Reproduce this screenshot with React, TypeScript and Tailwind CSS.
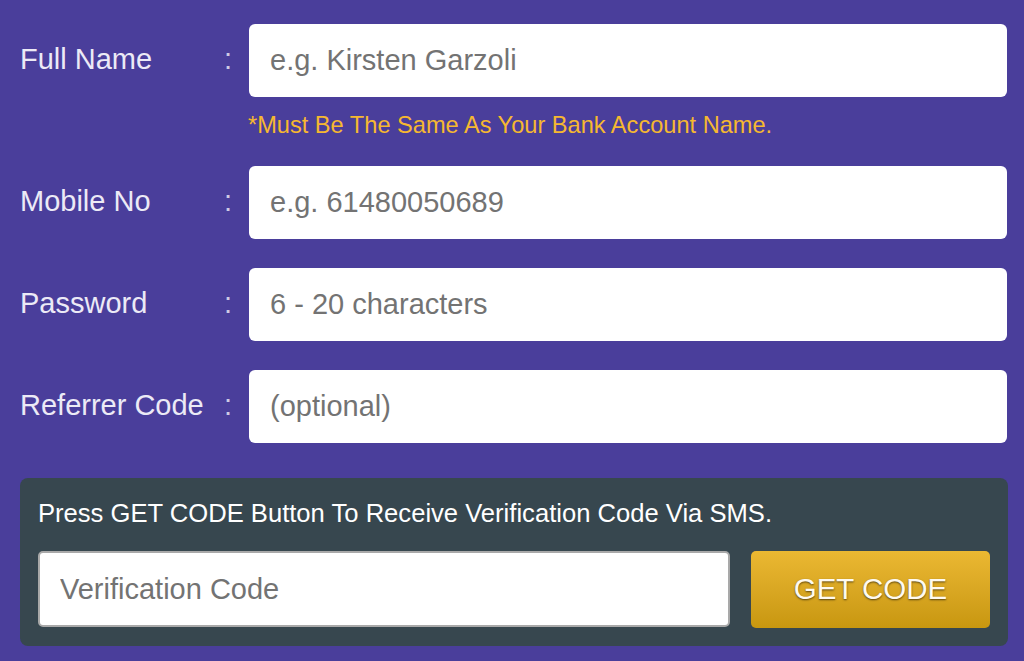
import React from 'react';

const font = { fontFamily: '"Liberation Sans", Arial, sans-serif' };

type RowProps = { label: string; placeholder: string; type?: string };

const FieldRow: React.FC<RowProps> = ({ label, placeholder, type = 'text' }) => (
  <div className="flex items-center">
    <div className="flex items-center pl-5 -mt-1">
      <span className="w-[186px] overflow-x-clip whitespace-nowrap text-[29px] leading-[36px] text-[#eceaf6]">
        {label}
      </span>
      <span className="w-[43px] pl-[18px] text-[29px] leading-[36px] text-[#cfcbe6]">:</span>
    </div>
    <input
      type={type}
      placeholder={placeholder}
      className="h-[73px] flex-1 mr-[17px] rounded-[6px] bg-white pl-[21px] text-[29px] text-[#333] placeholder:text-[#737373] outline-none"
    />
  </div>
);

const App: React.FC = () => {
  return (
    <div className="min-h-screen w-full bg-[#4a3e9b] pt-6" style={font}>
      <FieldRow label="Full Name" placeholder="e.g. Kirsten Garzoli" />
      <div className="h-[69px] pl-[248px] pt-[14px]">
        <p className="text-[23.6px] leading-[28px] text-[#f6b830]">
          *Must Be The Same As Your Bank Account Name.
        </p>
      </div>

      <div className="flex flex-col gap-[29px]">
        <FieldRow label="Mobile No" placeholder="e.g. 61480050689" type="tel" />
        <FieldRow label="Password" placeholder="6 - 20 characters" type="password" />
        <FieldRow label="Referrer Code" placeholder="(optional)" />
      </div>

      <div className="mx-5 mt-[35px] w-[988px] rounded-[8px] bg-[#37474f] px-[18px] pt-5 pb-[18px]">
        <p className="text-[25.6px] leading-[30px] text-white">
          Press GET CODE Button To Receive Verification Code Via SMS.
        </p>
        <div className="mt-[23px] flex gap-[21px]">
          <input
            type="text"
            placeholder="Verification Code"
            className="h-[76px] w-[692px] rounded-[5px] border-2 border-[#a9a9a9] bg-white pl-[20px] text-[29px] text-[#333] placeholder:text-[#737373] outline-none"
          />
          <button
            className="h-[77px] flex-1 rounded-[5px] bg-gradient-to-b from-[#ebb832] to-[#c8970f] text-[29.5px] text-[#fffaf0] [text-shadow:0_1px_2px_rgba(0,0,0,0.6)]"
          >
            GET CODE
          </button>
        </div>
      </div>
    </div>
  );
};

export default App;
